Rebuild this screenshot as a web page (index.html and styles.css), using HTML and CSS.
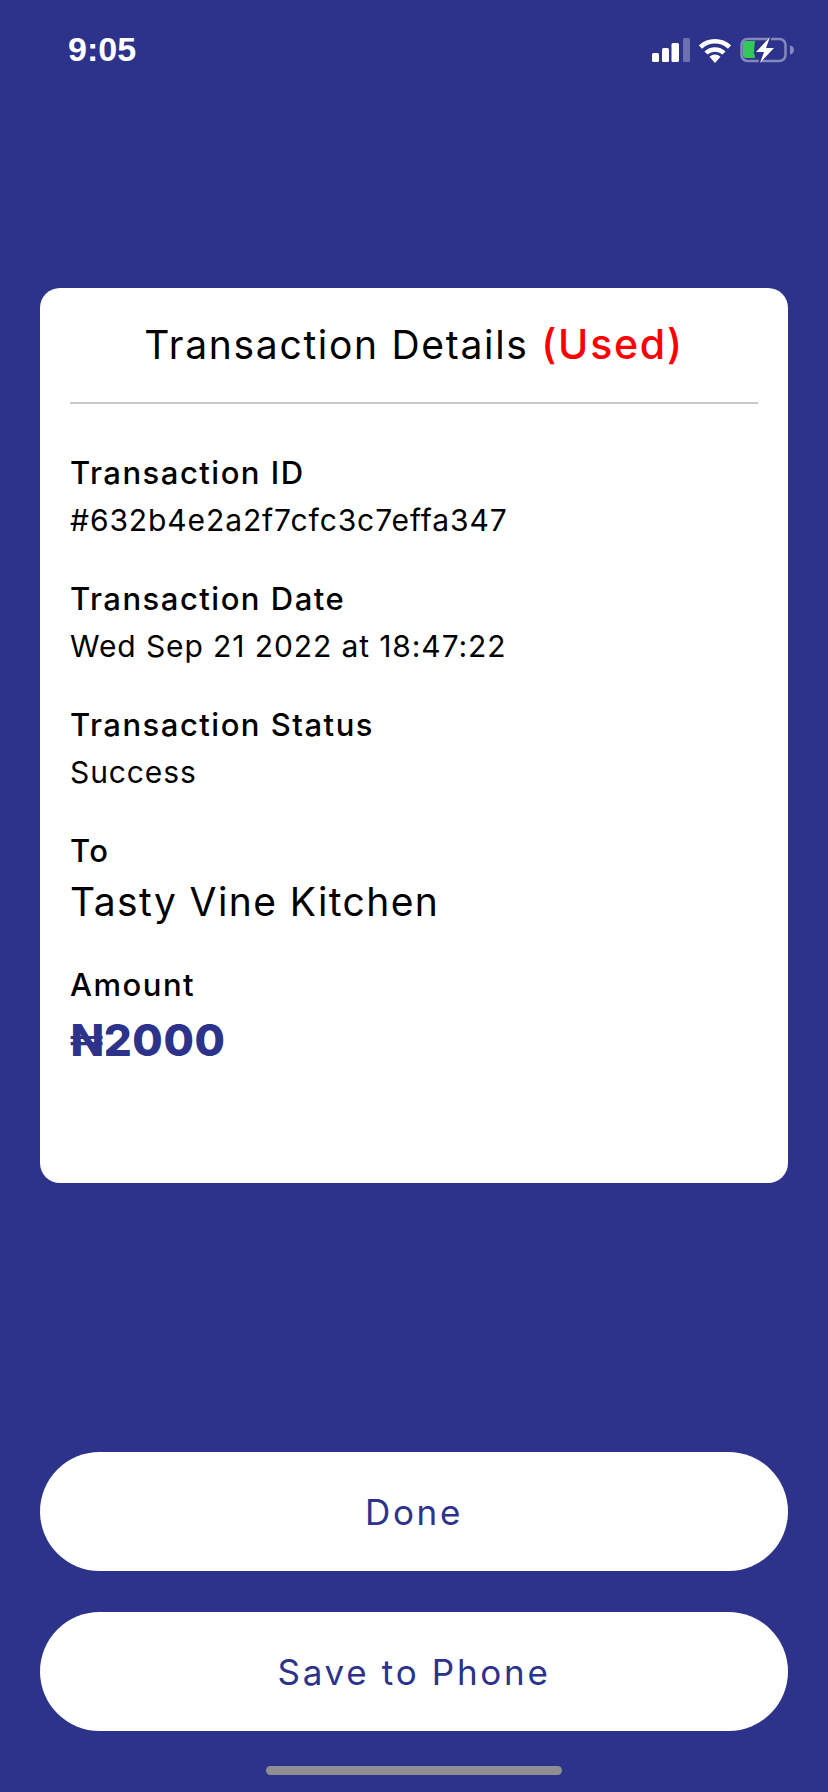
FILE: index.html
```html
<!DOCTYPE html>
<html lang="en">
<head>
<meta charset="utf-8">
<title>Transaction Details</title>
<link rel="stylesheet" href="styles.css">
</head>
<body>
<div class="screen">
  <header class="status">
    <span class="time">9:05</span>
    <div class="status-icons">
      <svg class="signal" width="38" height="24" viewBox="0 0 38 24"><rect x="0" y="15" width="7" height="9" rx="1.500" fill="#fff"/><rect x="10" y="10" width="7" height="14" rx="1.500" fill="#fff"/><rect x="19.500" y="5" width="7.500" height="19" rx="1.500" fill="#fff"/><rect x="31" y="0" width="7" height="24" rx="1.500" fill="#fff" fill-opacity=".3"/></svg>
      <svg class="wifi" width="32" height="25" viewBox="0 0 32 25"><path d="M1.500 9a21 21 0 0 1 29 0" fill="none" stroke="#fff" stroke-width="4.500"/><path d="M7 15a13 13 0 0 1 18 0" fill="none" stroke="#fff" stroke-width="4.500"/><path d="M16 25l-5.500-6.200a8 8 0 0 1 11 0z" fill="#fff"/></svg>
      <svg class="battery" width="55" height="28" viewBox="0 0 55 28"><rect x="1.500" y="3" width="44" height="22" rx="6" fill="none" stroke="#fff" stroke-opacity=".42" stroke-width="2.500"/><path d="M50 9.500c2.500.5 4 2.200 4 4.500s-1.500 4-4 4.500z" fill="#fff" fill-opacity=".42"/><path d="M6 5h9l-1 9 1 8H6a3 3 0 0 1-3-3V8a3 3 0 0 1 3-3z" fill="#34c759"/><path d="M32 -1L13 17.500h8L17.500 29 37 10.500h-8z" fill="#2d338b"/><path d="M30 1L16 16h8L20 27 34 12h-8z" fill="#fff"/></svg>
    </div>
  </header>

  <main class="card">
    <h1 class="card-title">Transaction Details <span class="used">(Used)</span></h1>
    <dl class="details">
      <div class="row">
        <dt class="label">Transaction ID</dt>
        <dd class="value">#632b4e2a2f7cfc3c7effa347</dd>
      </div>
      <div class="row">
        <dt class="label">Transaction Date</dt>
        <dd class="value">Wed Sep 21 2022 at 18:47:22</dd>
      </div>
      <div class="row">
        <dt class="label">Transaction Status</dt>
        <dd class="value">Success</dd>
      </div>
      <div class="row">
        <dt class="label">To</dt>
        <dd class="value value-large">Tasty Vine Kitchen</dd>
      </div>
      <div class="row">
        <dt class="label">Amount</dt>
        <dd class="value value-amount">₦2000</dd>
      </div>
    </dl>
  </main>

  <div class="actions">
    <button class="btn" type="button">Done</button>
    <button class="btn" type="button">Save to Phone</button>
  </div>
  <div class="home-bar"></div>
</div>
</body>
</html>
```

FILE: styles.css
```css
* { box-sizing: border-box; margin: 0; padding: 0; }
html, body { width: 828px; height: 1792px; overflow: hidden; }
body { background: #2d338b; font-family: Inter, "Noto Sans", sans-serif; color: #000; }
.screen { width: 828px; height: 1792px; display: flex; flex-direction: column; padding: 0 40px; }
.status { height: 288px; display: flex; justify-content: space-between; align-items: flex-start; padding: 29px 0 0 28px; margin-right: -7px; flex: none; }
.time { font-family: "Liberation Sans", sans-serif; font-size: 34px; line-height: 40px; font-weight: 700; color: #fff; }
.status-icons { display: flex; align-items: center; gap: 9px; height: 28px; margin-top: 7px; }
.card { height: 895px; background: #fff; border-radius: 20px; padding: 0 30px; flex: none; }
.card-title { height: 116px; border-bottom: 2px solid #c8c8c8; text-align: center; font-size: 39px; font-weight: 400; line-height: 45px; padding-top: 34px; letter-spacing: 1.700px; }
.used { color: #f00; font-size: 41px; font-weight: 500; }
.details { padding-top: 51px; display: flex; flex-direction: column; }
.row { margin-bottom: 41px; }
.label { font-size: 31px; font-weight: 500; line-height: 36px; letter-spacing: 1.500px; }
.value { font-size: 30px; line-height: 40px; margin-top: 9px; letter-spacing: .9px; }
.value-large { font-size: 39px; line-height: 48px; letter-spacing: 1.400px; }
.value-amount { font-size: 44px; line-height: 56px; font-weight: 800; color: #2d338b; letter-spacing: .6px; }
.actions { margin-top: 269px; display: flex; flex-direction: column; gap: 41px; flex: none; }
.btn { height: 119px; border: 0; border-radius: 60px; background: #fff; color: #2d338b; font-family: inherit; font-size: 35px; letter-spacing: 2.700px; }
.home-bar { width: 296px; height: 9px; border-radius: 5px; background: #8e8e93; margin: 35px auto 0; flex: none; }
```
